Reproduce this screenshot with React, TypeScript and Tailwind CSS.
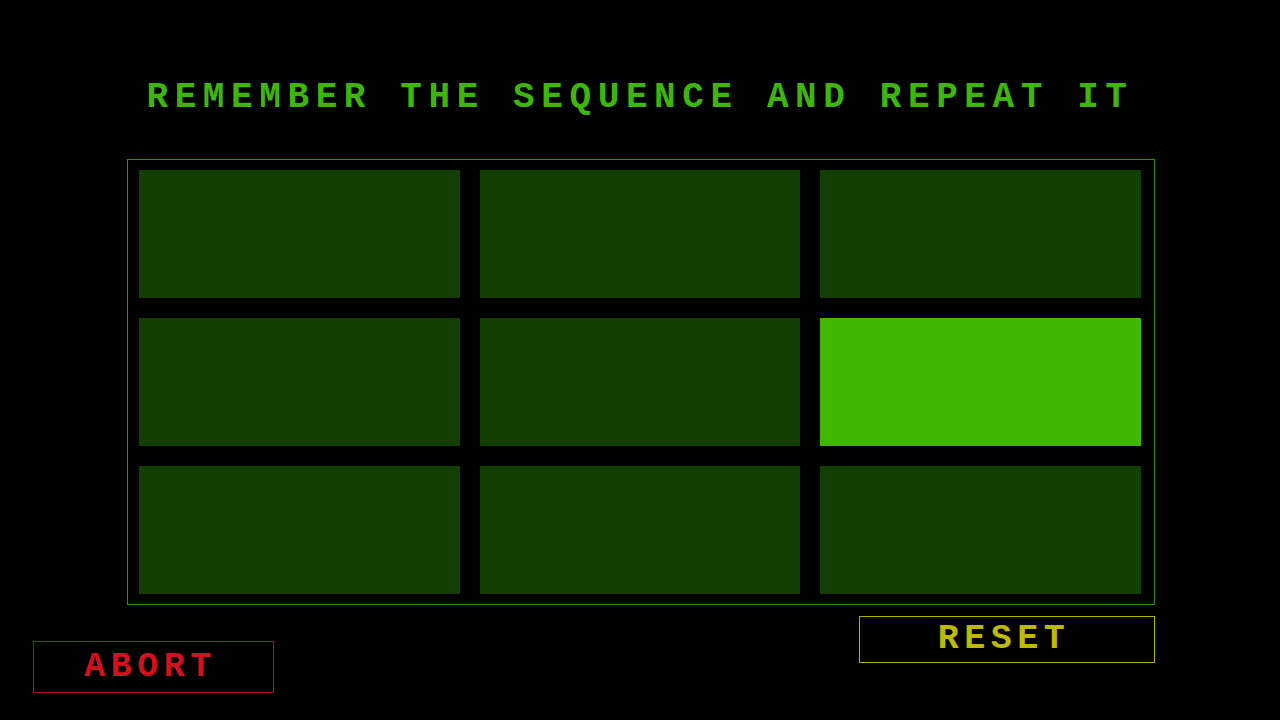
const cells = [false, false, false, false, false, true, false, false, false];

export default function App() {
  return (
    <div
      className="w-[1280px] h-[720px] bg-black flex flex-col overflow-hidden"
      style={{ fontFamily: '"Liberation Mono", "DejaVu Sans Mono", monospace' }}
    >
      {/* Title */}
      <h1 className="mt-[79px] text-center text-[36px] leading-[38px] font-bold tracking-[6.6px] text-[#3fb50c]">
        REMEMBER THE SEQUENCE AND REPEAT IT
      </h1>

      {/* Grid of tiles */}
      <div className="mt-[42px] ml-[127px] w-[1028px] border border-[#3a8a12] pl-[11px] pr-[13px] py-[10px]">
        <div className="grid grid-cols-[321px_320px_321px] gap-x-[20px] gap-y-[20px]">
          {cells.map((lit, i) => (
            <div
              key={i}
              className={lit ? 'h-[128px] bg-[#40b800]' : 'h-[128px] bg-[#123f02]'}
            />
          ))}
        </div>
      </div>

      {/* Bottom buttons */}
      <div className="flex items-start">
        <button className="mt-[36px] ml-[33px] w-[241px] h-[52px] border border-[#b3101c] pr-[6px] text-[#d0121e] text-[35px] font-bold tracking-[5.5px] leading-none flex items-center justify-center">
          ABORT
        </button>
        <div className="flex-1" />
        <button className="mt-[11px] mr-[125px] w-[296px] h-[47px] border border-[#b2ad10] pr-[6px] text-[#bdb800] text-[35px] font-bold tracking-[5.5px] leading-none flex items-center justify-center">
          RESET
        </button>
      </div>
    </div>
  );
}
